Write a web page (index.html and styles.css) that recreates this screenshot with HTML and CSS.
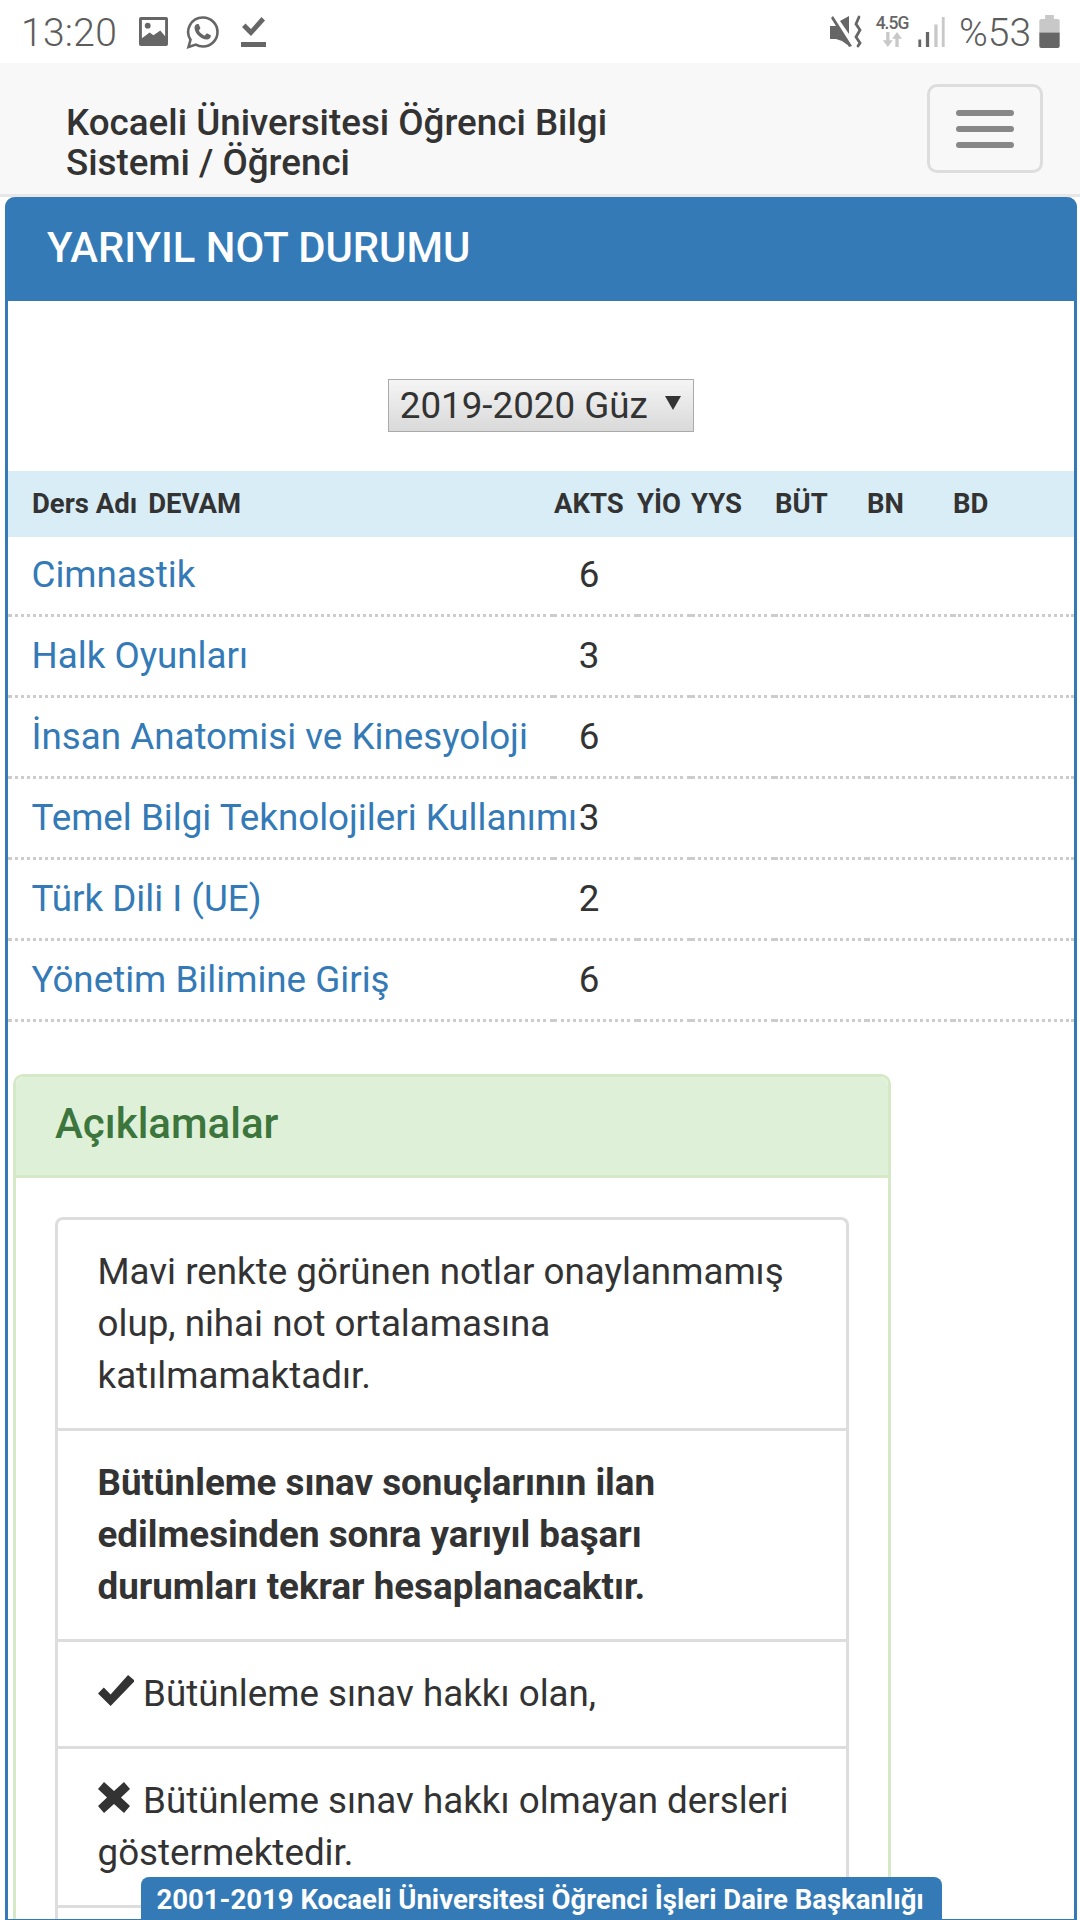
FILE: index.html
```html
<!DOCTYPE html>
<html lang="tr">
<head>
<meta charset="utf-8">
<title>Yarıyıl Not Durumu</title>
<link rel="stylesheet" href="styles.css">
</head>
<body>
<div class="status">
  <div class="status-left">
    <span class="time">13:20</span>
    <svg class="ic-img" viewBox="0 0 30 30"><path fill="#666" d="M2 0h26a2 2 0 0 1 2 2v26a2 2 0 0 1-2 2H2a2 2 0 0 1-2-2V2a2 2 0 0 1 2-2z"/><path fill="#fff" d="M3 3h24v17l-5-6-7 5-4-3-8 6z"/><circle cx="9" cy="9" r="3" fill="#666"/></svg>
    <svg class="ic-wa" viewBox="0 0 34 34"><path fill="none" stroke="#666" stroke-width="2.6" d="M17 2.5a14.5 14.5 0 0 1 0 29c-2.6 0-5-.6-7.2-1.9L2.5 32l2-7.2A14.5 14.5 0 0 1 17 2.5z"/><path fill="#666" d="M11.7 9c.6 0 1 0 1.3.7l1.3 3.2c.1.4 0 .7-.2 1l-1 1.2c-.3.3-.3.6 0 1 1.200 2 2.800 3.400 5 4.400.4.200.7.100.9-.1l1.300-1.600c.3-.4.600-.4 1-.2l3 1.500c.4.200.6.400.6.700 0 2.300-2 3.700-4.100 3.700-5.500 0-12.300-6.200-12.300-11.800C8.500 10.500 10 9 11.700 9z"/></svg>
    <svg class="ic-chk" viewBox="0 0 25 30"><path fill="#666" d="M0 25h25v5H0zM1 10l3.500-3.500L10 12 20.500 0 24 3.500 10 19z"/></svg>
  </div>
  <div class="status-right">
    <svg class="ic-mute" viewBox="0 0 32 33"><path fill="#666" d="M0 11h6l2-2 12 21-1 1-7-5-6-2H0zM10 6l9-5v18zM1 3l2-2 19 30-3 1z"/><path fill="none" stroke="#666" stroke-width="2.800" stroke-linecap="round" d="M29 2l-3 7 4 6-4 7 4 6-2 3"/></svg>
    <span class="net"><span class="net-label">4.5G</span><svg class="ic-arrows" viewBox="0 0 24 18"><path fill="#c8c8c8" d="M5 0h4v10h4l-6 8-6-8h4zM16 18h4V8h4l-6-8-6 8h4z"/></svg></span>
    <svg class="ic-sig" viewBox="0 0 28 32"><rect x="0" y="24" width="3" height="8" fill="#666"/><rect x="8" y="16" width="3.500" height="16" fill="#666"/><rect x="17" y="8" width="3.500" height="24" fill="#c8c8c8"/><rect x="25" y="0" width="3" height="32" fill="#c8c8c8"/></svg>
    <span class="batt-text">%53</span>
    <svg class="ic-batt" viewBox="0 0 21 34"><path fill="#c8c8c8" d="M6 0h9v4h4a2 2 0 0 1 2 2v12H0V6a2 2 0 0 1 2-2h4z"/><path fill="#666" d="M0 18h21v14a2 2 0 0 1-2 2H2a2 2 0 0 1-2-2z"/></svg>
  </div>
</div>

<nav class="navbar">
  <a class="brand">Kocaeli Üniversitesi Öğrenci Bilgi Sistemi / Öğrenci</a>
  <button class="toggle" type="button"><span class="bar"></span><span class="bar"></span><span class="bar"></span></button>
</nav>

<section class="panel">
  <h3 class="panel-title">YARIYIL NOT DURUMU</h3>
  <div class="term-row">
    <span class="term-select">2019-2020 Güz<span class="term-arrow"></span></span>
  </div>
  <table class="grades">
    <colgroup>
      <col class="c-name"><col class="c-akts"><col class="c-yio"><col class="c-yys"><col class="c-but"><col class="c-bn"><col class="c-bd">
    </colgroup>
    <thead>
      <tr><th>Ders Adı<span class="devam">DEVAM</span></th><th>AKTS</th><th>YİO</th><th>YYS</th><th>BÜT</th><th>BN</th><th>BD</th></tr>
    </thead>
    <tbody>
      <tr><td><a>Cimnastik</a></td><td class="num">6</td><td></td><td></td><td></td><td></td><td></td></tr>
      <tr><td><a>Halk Oyunları</a></td><td class="num">3</td><td></td><td></td><td></td><td></td><td></td></tr>
      <tr><td><a>İnsan Anatomisi ve Kinesyoloji</a></td><td class="num">6</td><td></td><td></td><td></td><td></td><td></td></tr>
      <tr><td><a>Temel Bilgi Teknolojileri Kullanımı</a></td><td class="num">3</td><td></td><td></td><td></td><td></td><td></td></tr>
      <tr><td><a>Türk Dili I (UE)</a></td><td class="num">2</td><td></td><td></td><td></td><td></td><td></td></tr>
      <tr><td><a>Yönetim Bilimine Giriş</a></td><td class="num">6</td><td></td><td></td><td></td><td></td><td></td></tr>
    </tbody>
  </table>

  <div class="notes">
    <h3 class="notes-title">Açıklamalar</h3>
    <div class="notes-body">
      <ul class="list">
        <li>Mavi renkte görünen notlar onaylanmamış olup, nihai not ortalamasına katılmamaktadır.</li>
        <li class="strong">Bütünleme sınav sonuçlarının ilan edilmesinden sonra yarıyıl başarı durumları tekrar hesaplanacaktır.</li>
        <li><span class="glyph-box"><svg class="glyph" viewBox="0 0 38 32"><path fill="#333" d="M0 19l6-6 7 7L31 0l7 6-25 26z"/></svg></span>Bütünleme sınav hakkı olan,</li>
        <li><span class="glyph-box"><svg class="glyph" viewBox="0 0 32 31"><path fill="#333" d="M0 7l6-7 10 9 10-9 6 7-9 8.500 9 8.500-6 7-10-9-10 9-6-7 9-8.500z"/></svg></span>Bütünleme sınav hakkı olmayan dersleri göstermektedir.</li>
      </ul>
    </div>
  </div>
</section>

<footer class="footer">2001-2019 Kocaeli Üniversitesi Öğrenci İşleri Daire Başkanlığı</footer>
</body>
</html>
```
FILE: styles.css
```css
* { box-sizing: border-box; }
html, body { margin: 0; padding: 0; }
body {
  width: 1080px;
  height: 1920px;
  overflow: hidden;
  position: relative;
  background: #fff;
  color: #333;
  font-family: Roboto, "Noto Sans", sans-serif;
  font-size: 36.75px;
  line-height: 52px;
}
svg { display: block; flex: none; }

.status {
  height: 63px;
  display: flex;
  justify-content: space-between;
  align-items: center;
  padding: 0 20px 0 21px;
  color: #5c5c5c;
}
.status-left, .status-right { display: flex; align-items: center; }
.time { font-size: 39px; font-weight: 300; line-height: 59px; margin-top: 4px; width: 117px; letter-spacing: 0.3px; }
.ic-img { width: 31px; height: 29px; }
.ic-wa { width: 34px; height: 34px; margin-left: 17px; }
.ic-chk { width: 25px; height: 30px; margin-left: 21px; }
.ic-mute { width: 32px; height: 33px; }
.net { display: flex; flex-direction: column; align-items: center; width: 34px; margin-left: 13px; }
.net-label { font-size: 17.500px; line-height: 15px; font-weight: 500; letter-spacing: -1px; white-space: nowrap; color: #666; }
.ic-arrows { width: 22px; height: 15px; margin-top: 1px; }
.ic-sig { width: 27px; height: 30px; margin-left: 9px; }
.batt-text { font-size: 39px; font-weight: 300; line-height: 59px; margin: 4px 0 0 14px; width: 80px; }
.ic-batt { width: 21px; height: 33px; }

.navbar {
  height: 134px;
  background: #f8f8f8;
  border-bottom: 3px solid #e7e7e7;
  display: flex;
  justify-content: space-between;
  align-items: flex-start;
  padding: 21px 37px 0 66px;
}
.brand { width: 590px; margin-top: 18.500px; font-size: 36.75px; line-height: 40px; font-weight: 500; color: #333; }
.toggle {
  width: 116px;
  height: 89px;
  padding: 0;
  background: transparent;
  border: 3px solid #ddd;
  border-radius: 10px;
  display: flex;
  flex-direction: column;
  align-items: center;
  justify-content: center;
  gap: 10px;
}
.bar { width: 58px; height: 6px; border-radius: 3px; background: #888; }

.panel {
  margin: 0 3.500px 0 5px;
  border: 3px solid #337ab7;
  border-top: 0;
  border-radius: 10px 10px 0 0;
}
.panel-title {
  margin: 0 -3px;
  height: 104px;
  padding: 0 0 0 42px;
  background: #337ab7;
  border-radius: 10px 10px 0 0;
  color: #fff;
  font-size: 41.800px;
  font-weight: 500;
  line-height: 102px;
}
.term-row { display: flex; justify-content: center; padding: 78px 0 39px; }
.term-select {
  width: 306px;
  height: 53px;
  margin-right: -1px;
  border: 1.500px solid #aaa;
  background: linear-gradient(#f5f5f5, #d9d9d9);
  font-size: 36.75px;
  line-height: 49px;
  padding-left: 10.500px;
  white-space: nowrap;
  display: flex;
  align-items: center;
}
.term-arrow {
  width: 0;
  height: 0;
  margin: -6px 0 0 17px;
  border-left: 8px solid transparent;
  border-right: 8px solid transparent;
  border-top: 14px solid #333;
}

.grades { width: 1066px; border-collapse: collapse; table-layout: fixed; }
.c-name { width: 546px; }
.c-akts { width: 83px; }
.c-yio { width: 54px; }
.c-yys { width: 84px; }
.c-but { width: 92px; }
.c-bn { width: 86px; }
.c-bd { width: 121px; }
.grades th {
  height: 66px;
  padding: 0;
  background: #d9edf7;
  font-size: 27.500px;
  font-weight: 700;
  text-align: left;
  white-space: nowrap;
}
.grades th:first-child { padding-left: 24px; }
.devam { margin-left: 11px; }
.grades td {
  height: 81px;
  padding: 0 0 13px;
  vertical-align: bottom;
  border-bottom: 3px dotted #ccc;
  white-space: nowrap;
}
.grades tbody tr:first-child td { height: 78.500px; }
.grades td:first-child { padding-left: 23.500px; }
.grades a { color: #337ab7; }
.grades td.num { text-align: center; padding-right: 13px; }

.notes {
  width: 878px;
  margin: 52px 0 0 5px;
  border: 3px solid #d6e9c6;
  border-bottom: 0;
  border-radius: 10px 10px 0 0;
}
.notes-title {
  margin: 0;
  height: 101px;
  padding-left: 39px;
  background: #dff0d8;
  border-bottom: 3px solid #d6e9c6;
  color: #3c763d;
  font-size: 42px;
  font-weight: 500;
  line-height: 94px;
  border-radius: 8px 8px 0 0;
}
.notes-body { padding: 39px 39px 0; }
.list { list-style: none; margin: 0; padding: 0 0 11px; border: 3px solid #ddd; border-bottom: 0; border-radius: 8px 8px 0 0; }
.list li { padding: 26px 38px 26px 39.500px; border-bottom: 3.500px solid #ddd; }
.strong { font-weight: 700; }
.glyph-box { display: inline-block; width: 45.500px; }
.glyph { display: inline-block; height: 31px; width: auto; vertical-align: 0; }
.footer {
  position: absolute;
  left: 140.500px;
  top: 1877px;
  width: 801px;
  height: 43px;
  padding-left: 16px;
  background: #337ab7;
  border-radius: 8px 8px 0 0;
  color: #fff;
  font-size: 27.500px;
  font-weight: 700;
  line-height: 46px;
  white-space: nowrap;
}
```
